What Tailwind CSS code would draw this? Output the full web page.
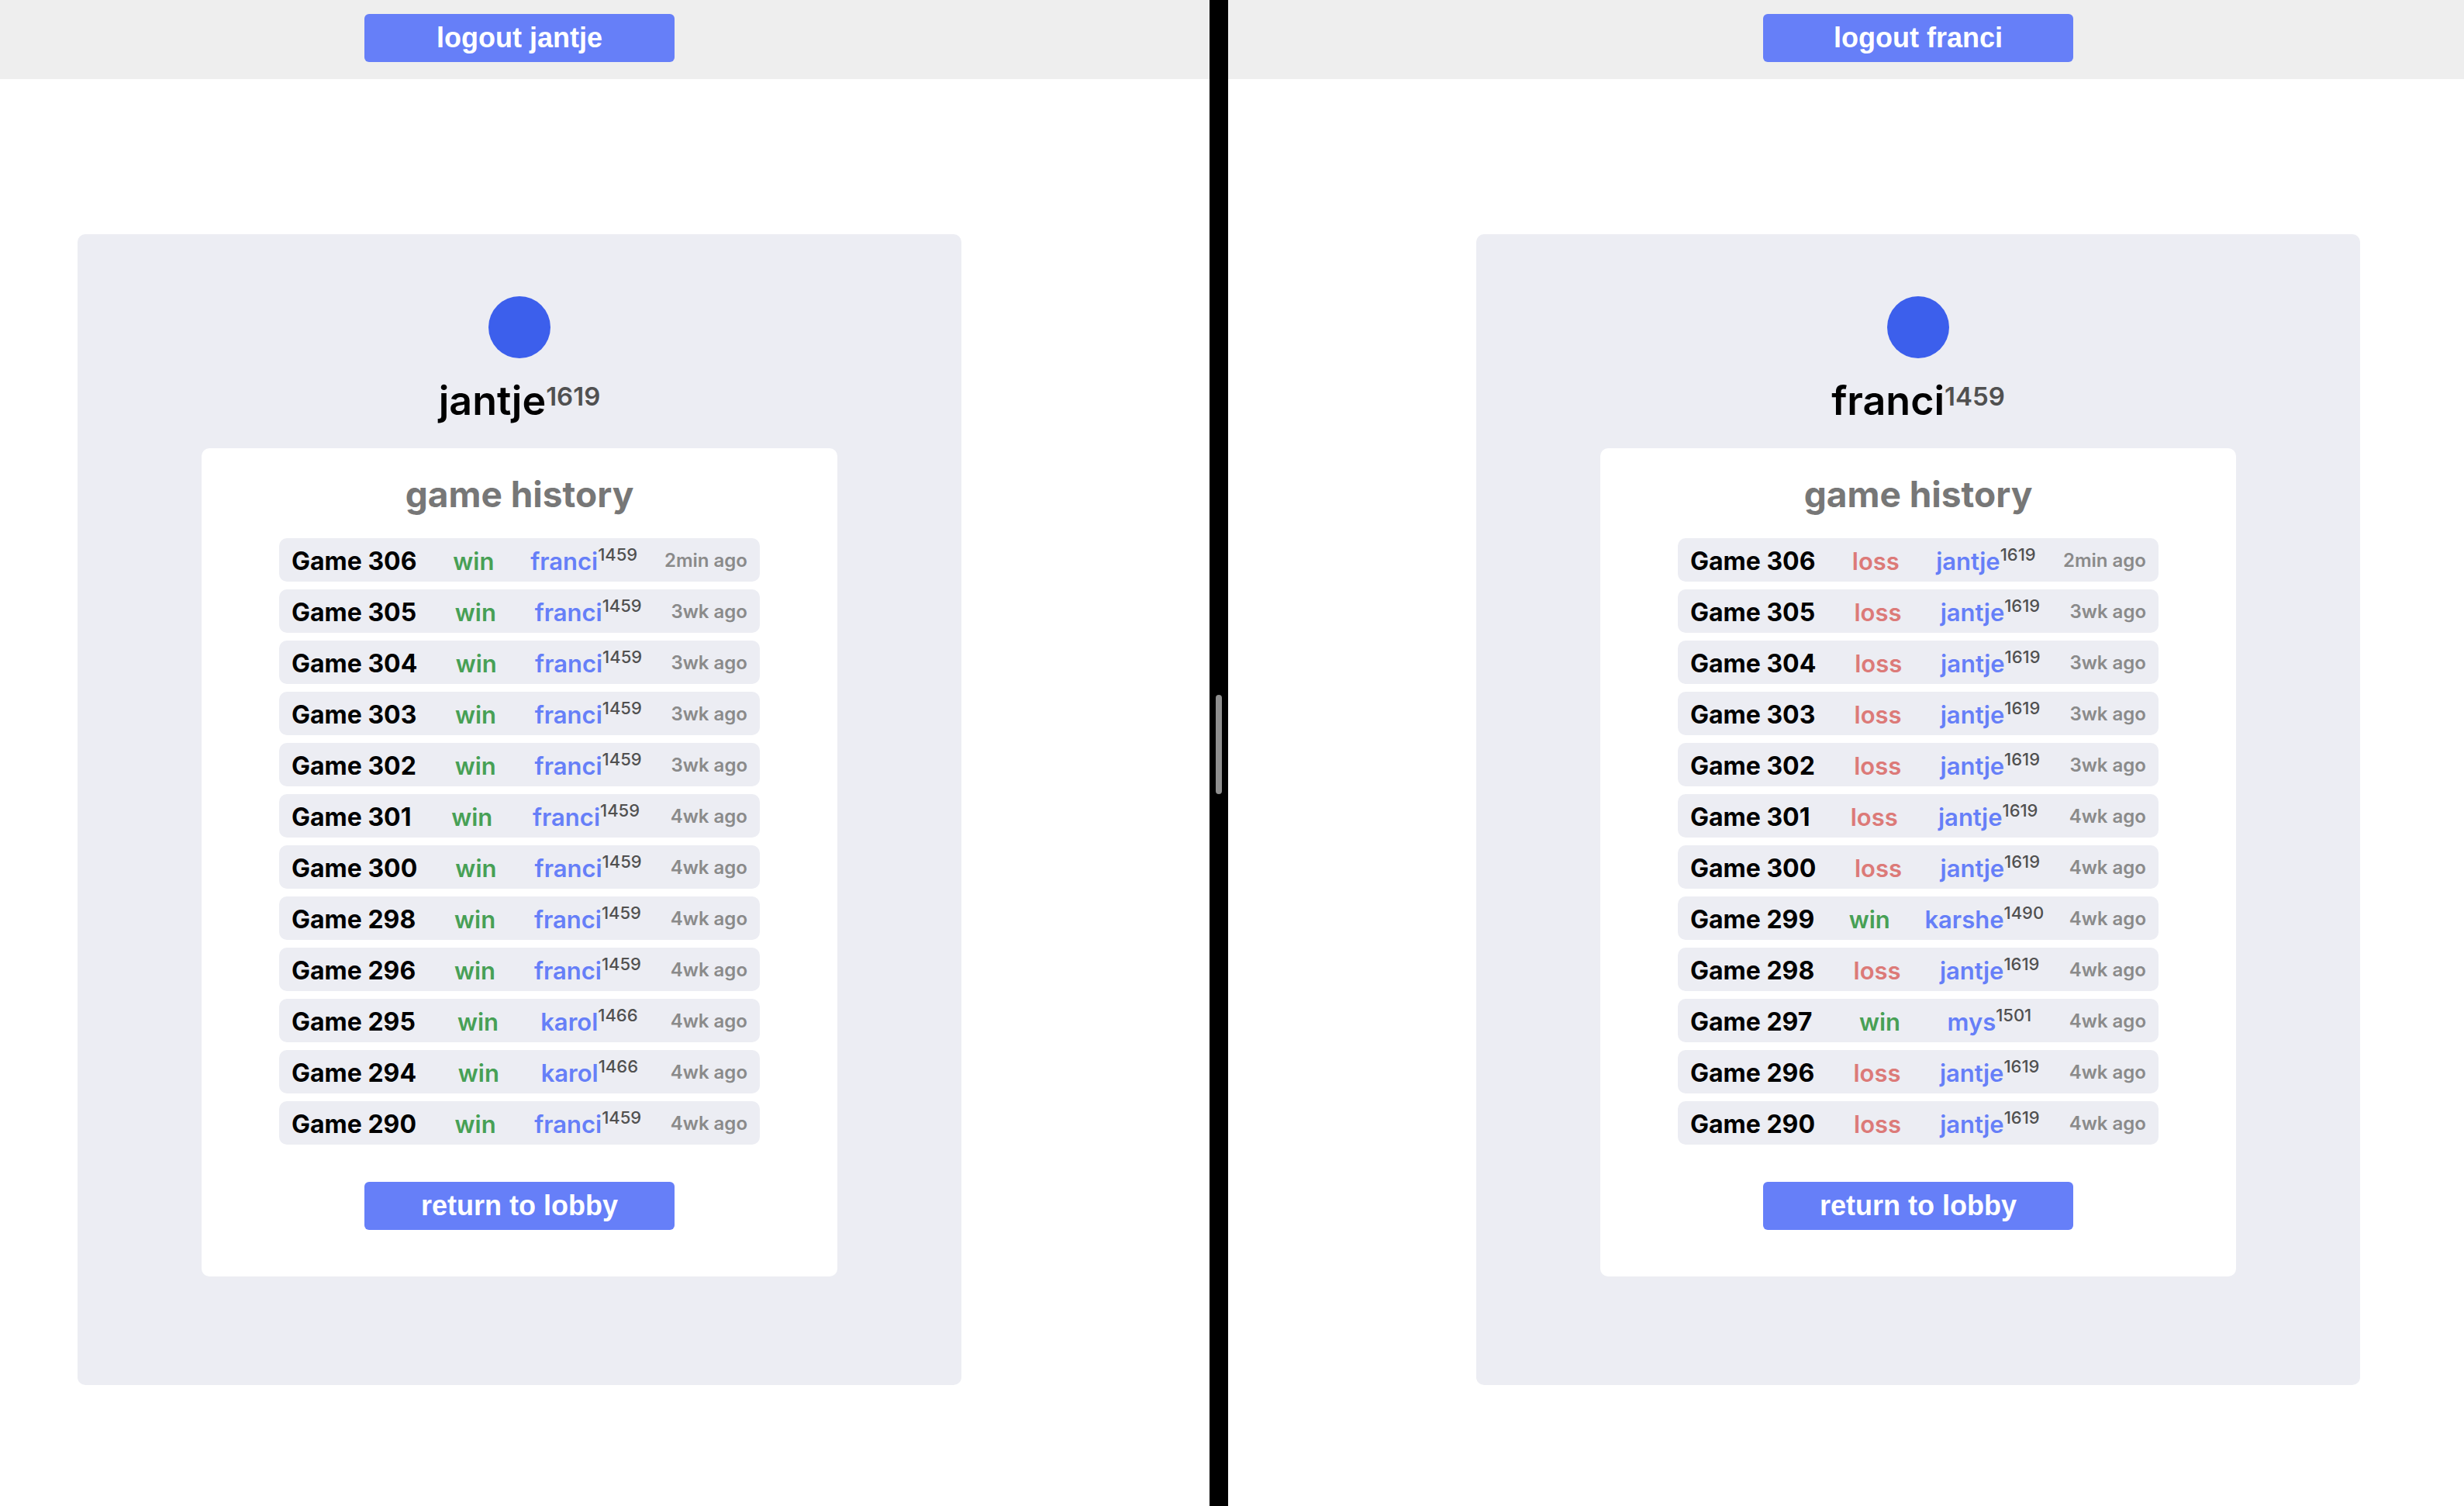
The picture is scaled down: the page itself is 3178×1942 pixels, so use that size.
<!DOCTYPE html>
<html lang="en">
<head>
<meta charset="utf-8">
<meta name="viewport" content="width=device-width, initial-scale=1">
<title>Game history</title>
<script src="https://cdn.jsdelivr.net/npm/@tailwindcss/browser@4"></script>
</head>
<body class="flex min-h-screen bg-white font-[Inter,sans-serif] text-black">

<section class="min-w-0 flex-[1560]" aria-label="jantje">
  <header class="flex justify-center bg-[#eeeeee] pt-[18px] pr-[220px] pb-[22px]">
    <button type="button" class="h-[62px] w-[400px] rounded-md bg-[#667ff8] font-['Liberation_Sans',sans-serif] text-[36px] font-bold text-white">logout jantje</button>
  </header>
  <main class="flex justify-center pt-[200px] pr-[220px] pb-12">
    <div class="flex w-full max-w-[1140px] flex-col items-center rounded-[10px] bg-[#ecedf3] pt-20 pb-[140px]">
      <div class="size-20 rounded-full bg-[#3c5fec]"></div>
      <h1 class="mt-6 text-[52px] leading-[62px] font-semibold">jantje<sup class="-top-3 text-[33px] font-semibold text-[#505050]">1619</sup></h1>
      <div class="mt-[30px] flex w-full max-w-[820px] flex-col items-center rounded-[10px] bg-white px-[100px] pt-8 pb-[60px]">
        <h2 id="history-jantje" class="text-[46px] leading-[54px] font-bold text-[#777777]">game history</h2>
        <table class="mt-[30px] block w-full" aria-labelledby="history-jantje">
          <tbody class="flex flex-col gap-[10px]" data-history="306 win franci 1459 2min|305 win franci 1459 3wk|304 win franci 1459 3wk|303 win franci 1459 3wk|302 win franci 1459 3wk|301 win franci 1459 4wk|300 win franci 1459 4wk|298 win franci 1459 4wk|296 win franci 1459 4wk|295 win karol 1466 4wk|294 win karol 1466 4wk|290 win franci 1459 4wk"></tbody>
        </table>
        <button type="button" class="mt-12 h-[62px] w-[400px] rounded-md bg-[#667ff8] font-['Liberation_Sans',sans-serif] text-[36px] font-bold text-white">return to lobby</button>
      </div>
    </div>
  </main>
</section>

<div class="flex w-6 shrink-0 items-center justify-center bg-black pb-[22px]" role="separator" aria-orientation="vertical">
  <div class="h-32 w-2 rounded-full bg-[#8e8e8e]"></div>
</div>

<section class="min-w-0 flex-[1594]" aria-label="franci">
  <header class="flex justify-center bg-[#eeeeee] pt-[18px] pb-[22px] pl-[186px]">
    <button type="button" class="h-[62px] w-[400px] rounded-md bg-[#667ff8] font-['Liberation_Sans',sans-serif] text-[36px] font-bold text-white">logout franci</button>
  </header>
  <main class="flex justify-center pt-[200px] pb-12 pl-[186px]">
    <div class="flex w-full max-w-[1140px] flex-col items-center rounded-[10px] bg-[#ecedf3] pt-20 pb-[140px]">
      <div class="size-20 rounded-full bg-[#3c5fec]"></div>
      <h1 class="mt-6 text-[52px] leading-[62px] font-semibold">franci<sup class="-top-3 text-[33px] font-semibold text-[#505050]">1459</sup></h1>
      <div class="mt-[30px] flex w-full max-w-[820px] flex-col items-center rounded-[10px] bg-white px-[100px] pt-8 pb-[60px]">
        <h2 id="history-franci" class="text-[46px] leading-[54px] font-bold text-[#777777]">game history</h2>
        <table class="mt-[30px] block w-full" aria-labelledby="history-franci">
          <tbody class="flex flex-col gap-[10px]" data-history="306 loss jantje 1619 2min|305 loss jantje 1619 3wk|304 loss jantje 1619 3wk|303 loss jantje 1619 3wk|302 loss jantje 1619 3wk|301 loss jantje 1619 4wk|300 loss jantje 1619 4wk|299 win karshe 1490 4wk|298 loss jantje 1619 4wk|297 win mys 1501 4wk|296 loss jantje 1619 4wk|290 loss jantje 1619 4wk"></tbody>
        </table>
        <button type="button" class="mt-12 h-[62px] w-[400px] rounded-md bg-[#667ff8] font-['Liberation_Sans',sans-serif] text-[36px] font-bold text-white">return to lobby</button>
      </div>
    </div>
  </main>
</section>

<script>
  // Each history entry is "id result opponent rating age".
  const resultColor = { win: 'text-[#47a055]', loss: 'text-[#dc7a78]' };
  for (const body of document.querySelectorAll('[data-history]')) {
    body.innerHTML = body.dataset.history.split('|').map(entry => {
      const [id, result, name, rating, age] = entry.split(' ');
      return `<tr class="flex h-14 items-center justify-between rounded-[10px] bg-[#ecedf3] px-4 whitespace-nowrap">
        <td class="pt-1 text-[32px] leading-10 font-bold">Game ${id}</td>
        <td class="pt-1 text-[31px] leading-10 font-semibold ${resultColor[result]}">${result}</td>
        <td class="-mr-3 pt-1 text-[31px] leading-10 font-semibold"><a href="#${name}" class="text-[#667ff8]">${name}</a><sup class="-top-3 text-[22px] font-medium text-[#505050]">${rating}</sup></td>
        <td class="pt-[2px] text-[24px] leading-10 font-semibold text-[#8a8a8a]">${age} ago</td>
      </tr>`;
    }).join('');
  }
</script>
</body>
</html>
